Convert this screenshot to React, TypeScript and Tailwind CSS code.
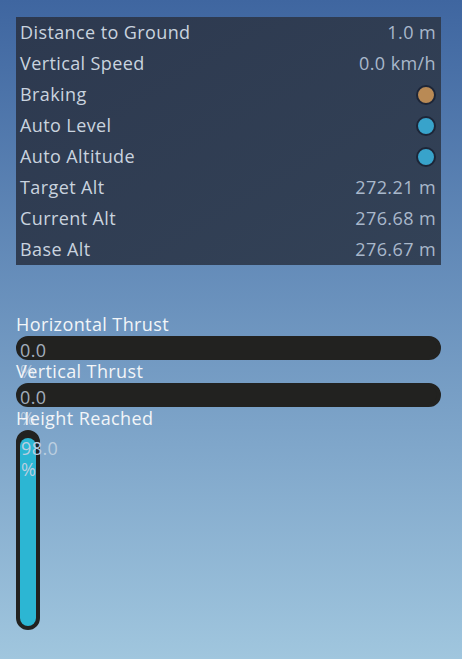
const rows: { label: string; value?: string; dot?: string }[] = [
  { label: 'Distance to Ground', value: '1.0 m' },
  { label: 'Vertical Speed', value: '0.0 km/h' },
  { label: 'Braking', dot: 'bg-[#b98a55]' },
  { label: 'Auto Level', dot: 'bg-[#38a3cb]' },
  { label: 'Auto Altitude', dot: 'bg-[#38a3cb]' },
  { label: 'Target Alt', value: '272.21 m' },
  { label: 'Current Alt', value: '276.68 m' },
  { label: 'Base Alt', value: '276.67 m' },
];

const HorizontalBar = ({ label, value }: { label: string; value: number }) => (
  <div className="flex flex-col">
    <div className="h-[23px] leading-[23px] text-[18px] text-[#f2f5f8]">{label}</div>
    <div className="h-6 w-full rounded-full border-4 border-[#222220] bg-[#222220]">
      <div className="h-full bg-[#2cb6d3]" style={{ width: `${value}%` }}>
        <div className="w-0 text-[18px] leading-[21px] text-[#c6d4e4]/80">{value.toFixed(1)} %</div>
      </div>
    </div>
  </div>
);

const VerticalBar = ({ label, value }: { label: string; value: number }) => (
  <div className="flex flex-col">
    <div className="relative z-10 h-[23px] leading-[23px] text-[18px] text-[#f2f5f8]">{label}</div>
    <div className="flex h-[200px] w-6 flex-col justify-end rounded-full border-4 border-[#222220] bg-[#222220]">
      <div className="w-full rounded-full bg-[#2cb6d3]" style={{ height: `${value}%` }}>
        <div className="w-0 pl-px text-[18px] leading-[21px] text-[#bccfe0]">{value.toFixed(1)} %</div>
      </div>
    </div>
  </div>
);

export default function App() {
  return (
    <div
      className="h-[659px] w-[462px] overflow-hidden bg-gradient-to-b from-[#3f66a0] to-[#a0c6de] pl-4 pt-[17px] tracking-[0.4px]"
      style={{ fontFamily: '"Open Sans", "DejaVu Sans", sans-serif' }}
    >
      <div className="flex w-[425px] flex-col bg-gradient-to-br from-[#2d394f] to-[#334257] pl-1 pr-[5px]">
        {rows.map((r) => (
          <div key={r.label} className="flex h-[31px] items-center justify-between text-[18px]">
            <span className="text-[#c9d3df]">{r.label}</span>
            {r.value ? (
              <span className="text-[#a9b8cb]">{r.value}</span>
            ) : (
              <span className={`h-5 w-5 rounded-full border-2 border-[#1d2638] ${r.dot}`} />
            )}
          </div>
        ))}
      </div>
      <div className="mt-12 flex w-[425px] flex-col">
        <HorizontalBar label="Horizontal Thrust" value={0} />
        <HorizontalBar label="Vertical Thrust" value={0} />
        <VerticalBar label="Height Reached" value={98} />
      </div>
    </div>
  );
}
